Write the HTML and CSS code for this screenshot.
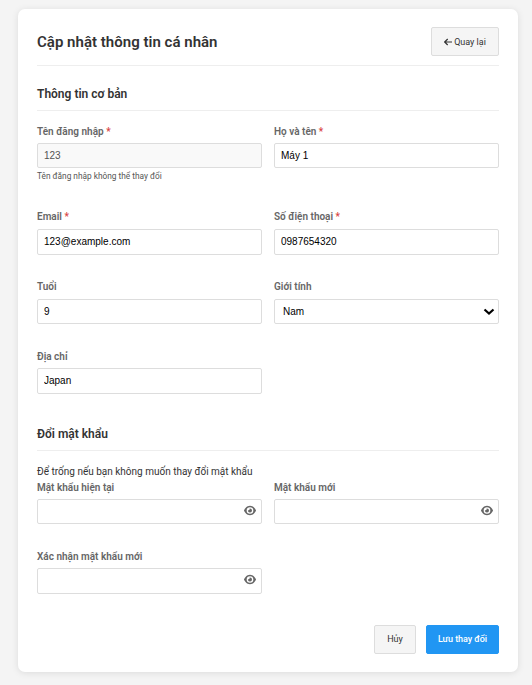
FILE: index.html
```html
<!DOCTYPE html>
<html lang="vi">
<head>
<meta charset="utf-8">
<title>Cập nhật thông tin cá nhân</title>
<link rel="stylesheet" href="styles.css">
</head>
<body>
<svg class="defs" width="0" height="0" aria-hidden="true">
  <symbol id="eye" viewBox="0 0 576 512"><path fill="currentColor" d="M288 32c-80.800 0-145.500 36.800-192.600 80.600C48.600 156 17.300 208 2.500 243.700c-3.300 7.900-3.300 16.700 0 24.600C17.300 304 48.600 356 95.400 399.400C142.500 443.200 207.200 480 288 480s145.500-36.800 192.600-80.600c46.800-43.500 78.100-95.400 93-131.100c3.300-7.900 3.300-16.700 0-24.600c-14.900-35.700-46.200-87.700-93-131.100C433.500 68.800 368.800 32 288 32zM128 256a160 160 0 1 1 320 0 160 160 0 1 1 -320 0zM288 160c-6 0-12 .6-18 2c12 50-22 88-76 76a96 96 0 1 0 94-78z"/></symbol>
</svg>
<main class="card">
  <header class="header">
    <h1>Cập nhật thông tin cá nhân</h1>
    <button class="btn back" type="button"><svg class="arrow" viewBox="0 0 8 8"><path d="M8 4H.8M3.700 1L.7 4l3 3"/></svg>Quay lại</button>
  </header>
  <form>
    <section class="basic">
      <h2>Thông tin cơ bản</h2>
      <div class="grid">
        <div class="group"><label for="user">Tên đăng nhập <i>*</i></label><input id="user" value="123" disabled><small>Tên đăng nhập không thể thay đổi</small></div>
        <div class="group"><label for="name">Họ và tên <i>*</i></label><input id="name" value="Máy 1"></div>
        <div class="group"><label for="email">Email <i>*</i></label><input id="email" value="123@example.com"></div>
        <div class="group"><label for="phone">Số điện thoại <i>*</i></label><input id="phone" value="0987654320"></div>
        <div class="group"><label for="age">Tuổi</label><input id="age" value="9"></div>
        <div class="group"><label for="gender">Giới tính</label>
          <div class="control"><select id="gender"><option>Nam</option></select><svg class="chevron" viewBox="0 0 12 8"><path d="M1.500 1.500L6 5.500l4.500-4"/></svg></div>
        </div>
        <div class="group"><label for="address">Địa chỉ</label><input id="address" value="Japan"></div>
      </div>
    </section>
    <section class="password">
      <h2>Đổi mật khẩu</h2>
      <p>Để trống nếu bạn không muốn thay đổi mật khẩu</p>
      <div class="grid">
        <div class="group"><label for="current">Mật khẩu hiện tại</label><div class="control"><input id="current" type="password"><svg class="eye"><use href="#eye"/></svg></div></div>
        <div class="group"><label for="new">Mật khẩu mới</label><div class="control"><input id="new" type="password"><svg class="eye"><use href="#eye"/></svg></div></div>
        <div class="group"><label for="confirm">Xác nhận mật khẩu mới</label><div class="control"><input id="confirm" type="password"><svg class="eye"><use href="#eye"/></svg></div></div>
      </div>
    </section>
    <footer class="actions">
      <button class="btn cancel" type="button">Hủy</button>
      <button class="btn save" type="button">Lưu thay đổi</button>
    </footer>
  </form>
</main>
</body>
</html>
```
FILE: styles.css
```css
* { box-sizing: border-box; }
body {
  margin: 0;
  padding: 9px 14px 13px 18px;
  height: 685px;
  overflow: hidden;
  background: #f4f4f4;
  color: #333;
  font: 10px/16px Roboto, sans-serif;
}
.defs { display: none; }
.card {
  height: 663px;
  padding: 18px 19px;
  background: #fff;
  border-radius: 7px;
  box-shadow: 0 1px 7px rgba(0, 0, 0, .1);
}
.header {
  display: flex;
  justify-content: space-between;
  align-items: center;
  height: 39px;
  padding-bottom: 9px;
  border-bottom: 1px solid #eee;
}
h1 { margin: 0; font-size: 15px; font-weight: 600; line-height: 22px; letter-spacing: .02px; }
h2 {
  margin: 0 0 13px;
  height: 26px;
  font-size: 12px;
  font-weight: 600;
  line-height: 18px;
  border-bottom: 1px solid #eee;
}
.basic { padding-top: 19px; }
.grid {
  display: grid;
  grid-template-columns: 1fr 1fr;
  gap: 24px 12px;
}
.group { display: flex; flex-direction: column; min-height: 45.5px; }
label {
  height: 16px;
  margin-bottom: 3px;
  font-weight: 600;
  color: #666;
}
label[for="email"], label[for="phone"],
label[for="age"], label[for="gender"] { line-height: 14px; }
label i { color: #d9433f; font-style: normal; font-weight: 500; }
input, select {
  width: 100%;
  height: 25.5px;
  margin: 0;
  padding: 0 6px;
  appearance: none;
  border: 1px solid #ddd;
  border-radius: 2px;
  background: #fff;
  color: #000;
  font: 10px "Liberation Sans", Arial, sans-serif;
}
#user, #name { height: 25px; }
input:disabled { background: #f9f9f9; color: #545454; }
select { display: block; padding-left: 8px; }
small { height: 18px; font-size: 8.300px; line-height: 16px; color: #555; }
.control { position: relative; height: 25.5px; }
.control input { display: block; }
.chevron {
  position: absolute;
  right: 4.500px;
  top: 9px;
  width: 12px;
  height: 8px;
  fill: none;
  stroke: #000;
  stroke-width: 2.200;
}
.eye {
  position: absolute;
  right: 6px;
  top: 6px;
  width: 12px;
  height: 11px;
  color: #666;
}
.password { padding-top: 30px; }
p { margin: 0; height: 16px; }
.actions {
  display: flex;
  justify-content: flex-end;
  gap: 10px;
  margin-top: 30px;
}
.btn {
  display: flex;
  align-items: center;
  justify-content: center;
  height: 29px;
  padding: 0;
  border: 1px solid #ddd;
  border-radius: 2px;
  background: #f5f5f5;
  color: #333;
  font: 400 9px Roboto, sans-serif;
}
.back { width: 68px; gap: 2px; }
.arrow { width: 8px; height: 8px; fill: none; stroke: #333; stroke-width: 1.200; }
.cancel { width: 42px; }
.save { width: 73px; background: #2196f3; border-color: #2196f3; color: #fff; font-weight: 500; letter-spacing: -.05px; }
```
